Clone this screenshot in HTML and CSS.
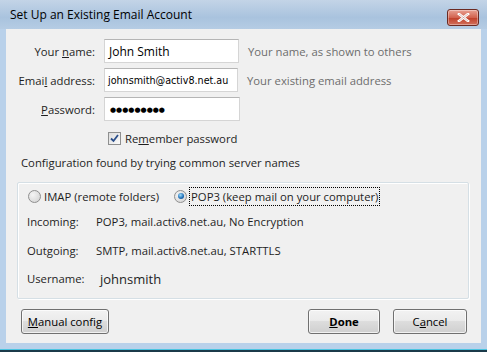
FILE: index.html
```html
<html>
<head>
    <link rel="stylesheet" href="styles.css">
</head>
<body>
    <div class="window">
        <div class="titlebar">
            <span class="title">Set Up an Existing Email Account</span>
            <button class="close-btn">
                <svg width="13" height="9" viewBox="0 0 13 9">
                    <path d="M2 1 L11 8 M11 1 L2 8" stroke="#ffffff" stroke-width="2.6" stroke-linecap="square"/>
                    <path d="M2 1 L11 8 M11 1 L2 8" stroke="#7a3a32" stroke-width="0.6" opacity="0.5"/>
                </svg>
            </button>
        </div>

        <div class="client">
            <!-- account fields -->
            <div class="fields">
                <div class="field-row">
                    <label class="field-label">Your <u>n</u>ame:</label>
                    <div class="textbox">John Smith</div>
                    <span class="hint">Your name, as shown to others</span>
                </div>
                <div class="field-row">
                    <label class="field-label">Emai<u>l</u> address:</label>
                    <div class="textbox small">johnsmith@activ8.net.au</div>
                    <span class="hint">Your existing email address</span>
                </div>
                <div class="field-row">
                    <label class="field-label"><u>P</u>assword:</label>
                    <div class="textbox dots">&#9679;&#9679;&#9679;&#9679;&#9679;&#9679;&#9679;&#9679;&#9679;</div>
                </div>
                <div class="check-row">
                    <span class="checkbox">
                        <svg width="9" height="9" viewBox="0 0 9 9">
                            <path d="M1 4.5 L3.5 7 L8 1" fill="none" stroke="#2a4e8a" stroke-width="1.8"/>
                        </svg>
                    </span>
                    <span>Re<u>m</u>ember password</span>
                </div>
            </div>

            <p class="status">Configuration found by trying common server names</p>

            <!-- server settings -->
            <div class="groupbox">
                <div class="radio-row">
                    <span class="radio-item"><span class="radio"></span>IMAP (remote folders)</span>
                    <span class="radio-item"><span class="radio checked"></span><span class="focused">POP3 (keep mail on your computer)</span></span>
                </div>
                <div class="server-grid">
                    <span>Incoming:</span><span>POP3, mail.activ8.net.au, No Encryption</span>
                    <span>Outgoing:</span><span>SMTP, mail.activ8.net.au, STARTTLS</span>
                    <span>Username:</span><span class="username">johnsmith</span>
                </div>
            </div>

            <div class="buttons">
                <button class="btn manual"><u>M</u>anual config</button>
                <span class="spacer"></span>
                <button class="btn done"><u>D</u>one</button>
                <button class="btn cancel">C<u>a</u>ncel</button>
            </div>
        </div>
        <div class="bottom-edge"></div>
    </div>
</body>
</html>
```

FILE: styles.css
```css
html, body {
    margin: 0;
    padding: 0;
}

body {
    width: 487px;
    height: 352px;
    overflow: hidden;
    font-family: "Open Sans", "DejaVu Sans", sans-serif;
    font-size: 11.3px;
    color: #1e1e1e;
}

.window {
    width: 487px;
    height: 352px;
    background: #b9d1ea;
    display: flex;
    flex-direction: column;
}

.titlebar {
    height: 29px;
    display: flex;
    align-items: flex-start;
    background: linear-gradient(#c3d4e7, #a9c3de 60%, #b5cce4);
}

.title {
    margin: 6px 0 0 10px;
    font-size: 12px;
    color: #000;
}

.close-btn {
    margin: 9px 8px 0 auto;
    width: 32px;
    height: 17px;
    border: 1px solid #6b2a22;
    border-radius: 3px;
    background: linear-gradient(#e8a193, #d2624e 50%, #c1422c 55%, #d2705c);
    padding: 0;
    display: flex;
    align-items: center;
    justify-content: center;
    box-shadow: inset 0 0 0 1px rgba(255,255,255,0.35);
}

.client {
    margin: 0 6px;
    height: 314px;
    background: #f0f0f0;
    display: flex;
    flex-direction: column;
}

.fields {
    padding-top: 10px;
    display: flex;
    flex-direction: column;
    gap: 5px;
}

.field-row {
    display: flex;
    align-items: center;
    height: 24px;
}

.field-label {
    width: 89px;
    text-align: right;
    margin-right: 9px;
}

.textbox {
    width: 127px;
    height: 22px;
    background: #fff;
    border: 1px solid #d5d5d5;
    border-top-color: #b5b5b5;
    padding: 0 2px 0 4px;
    display: flex;
    align-items: center;
    font-size: 12px;
    color: #000;
}

.textbox.small {
    font-family: "DejaVu Sans", sans-serif;
    font-size: 9.6px;
    padding-left: 3px;
}

.textbox.dots {
    font-size: 7px;
    padding-left: 5px;
}

.hint {
    margin-left: 9px;
    color: #6d6d6d;
}

.check-row {
    display: flex;
    align-items: center;
    margin-top: 5px;
    padding-left: 102px;
    height: 15px;
}

.checkbox {
    width: 11px;
    height: 11px;
    border: 1px solid #8e8f8f;
    background: linear-gradient(135deg, #dcdcdc, #fbfbfb);
    display: flex;
    align-items: center;
    justify-content: center;
    margin-right: 4px;
}

.status {
    margin: 9px 0 0 15px;
    line-height: 16px;
}

.groupbox {
    margin: 11px 0 0 11px;
    width: 450px;
    height: 115px;
    border: 1px solid #d5dfe5;
    box-shadow: 1px 1px 0 #fff, inset 1px 1px 0 #fff;
    border-radius: 2px;
    display: flex;
    flex-direction: column;
}

.radio-row {
    display: flex;
    align-items: center;
    height: 22px;
    margin-top: 2px;
    padding-left: 10px;
}

.radio-item {
    display: flex;
    align-items: center;
    margin-right: 15px;
}

.radio {
    width: 11px;
    height: 11px;
    border: 1px solid #8f8f8f;
    border-radius: 50%;
    background: radial-gradient(circle at 35% 35%, #f4f4f4, #d0d0d0);
    margin-right: 3px;
    display: inline-flex;
    align-items: center;
    justify-content: center;
}

.radio.checked::after {
    content: "";
    width: 6px;
    height: 6px;
    border-radius: 50%;
    background: radial-gradient(circle at 40% 35%, #9fdcfb, #1a6bb5 60%, #0e3d78);
}

.focused {
    outline: 1px dotted #000;
    padding: 1px 1px;
}

.server-grid {
    display: grid;
    grid-template-columns: 69px auto;
    grid-auto-rows: 28.5px;
    align-items: center;
    margin-top: 1px;
    padding-left: 9px;
    line-height: 16px;
}

.username {
    font-size: 13px;
    padding-left: 4px;
}

.buttons {
    display: flex;
    align-items: center;
    margin-top: 10px;
    padding: 0 14px 0 15px;
}

.spacer {
    flex: 1;
}

.btn {
    height: 25px;
    border: 1px solid #707070;
    border-radius: 3px;
    background: linear-gradient(#f2f2f2, #ebebeb 45%, #dddddd 50%, #cfcfcf);
    box-shadow: inset 0 0 0 1px rgba(255,255,255,0.7);
    font-family: inherit;
    font-size: 11.3px;
    color: #000;
    padding: 0;
}

.manual {
    width: 88px;
}

.done {
    width: 72px;
    font-weight: bold;
    margin-right: 13px;
}

.cancel {
    width: 74px;
}

.bottom-edge {
    margin-top: 6px;
    height: 3px;
    background: linear-gradient(#4bc4e0 33%, #1b3a4a 33%);
}
```
